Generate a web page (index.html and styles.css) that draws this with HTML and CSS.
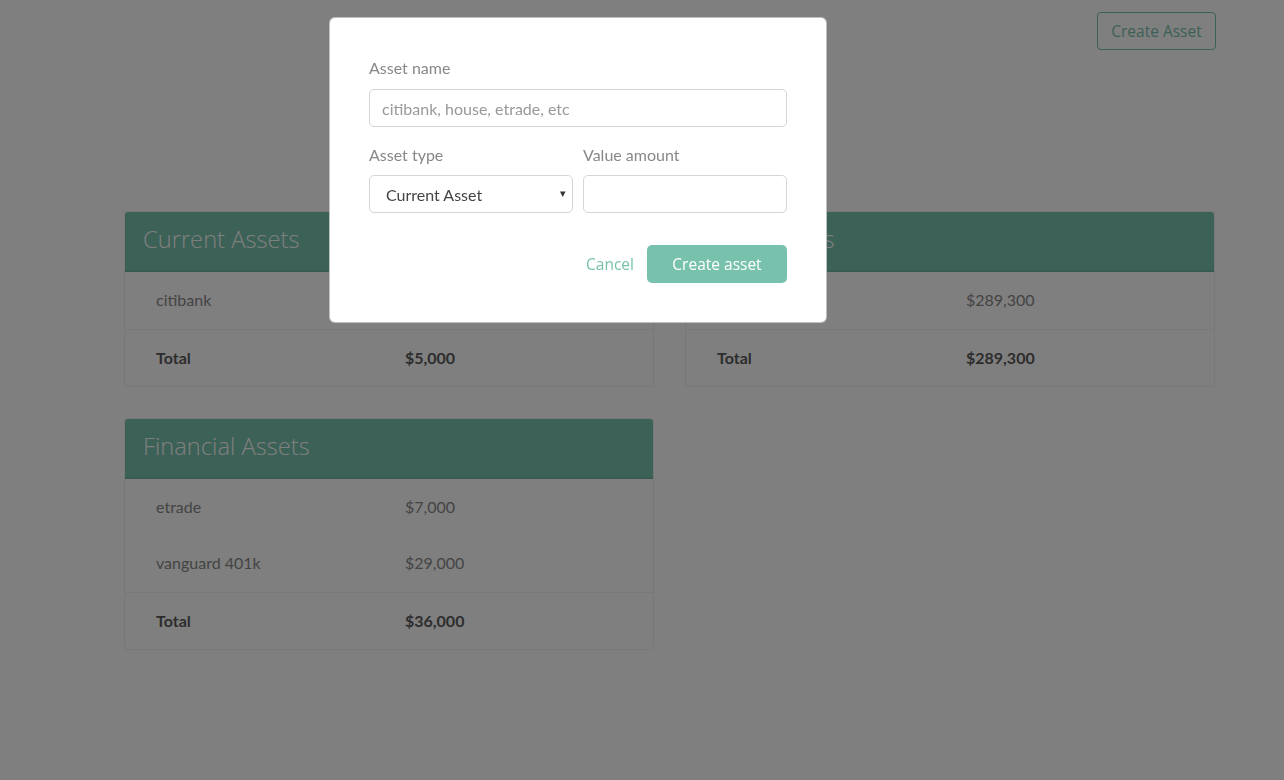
FILE: index.html
```html
<!DOCTYPE html>
<html lang="en">
<head>
<meta charset="utf-8">
<title>Assets</title>
<link rel="stylesheet" href="styles.css">
</head>
<body>
<div class="page">
  <div class="topbar">
    <button class="btn-outline">Create Asset</button>
  </div>
  <div class="grid">
    <section class="panel">
      <header class="panel-head">Current Assets</header>
      <table class="tbl">
        <tbody>
          <tr><td>citibank</td><td>$5,000</td></tr>
        </tbody>
        <tfoot>
          <tr><td>Total</td><td>$5,000</td></tr>
        </tfoot>
      </table>
    </section>
    <section class="panel">
      <header class="panel-head">Fixed Assets</header>
      <table class="tbl">
        <tbody>
          <tr><td>house</td><td>$289,300</td></tr>
        </tbody>
        <tfoot>
          <tr><td>Total</td><td>$289,300</td></tr>
        </tfoot>
      </table>
    </section>
    <section class="panel">
      <header class="panel-head">Financial Assets</header>
      <table class="tbl">
        <tbody>
          <tr><td>etrade</td><td>$7,000</td></tr>
          <tr><td>vanguard 401k</td><td>$29,000</td></tr>
        </tbody>
        <tfoot>
          <tr><td>Total</td><td>$36,000</td></tr>
        </tfoot>
      </table>
    </section>
  </div>
</div>

<div class="backdrop">
  <div class="modal">
    <div class="field">
      <label class="lbl" for="name">Asset name</label>
      <input class="inp" id="name" type="text" placeholder="citibank, house, etrade, etc">
    </div>
    <div class="field-row">
      <div class="field">
        <label class="lbl" for="type">Asset type</label>
        <div class="select">
          <span class="select-val">Current Asset</span>
          <span class="caret">&#9662;</span>
        </div>
      </div>
      <div class="field">
        <label class="lbl" for="amount">Value amount</label>
        <input class="inp" id="amount" type="text">
      </div>
    </div>
    <div class="actions">
      <button class="btn-link">Cancel</button>
      <button class="btn-primary">Create asset</button>
    </div>
  </div>
</div>
</body>
</html>
```

FILE: styles.css
```css
* { box-sizing: border-box; }

html, body {
  margin: 0;
  padding: 0;
  background: #fff;
  font-family: Lato, "Liberation Sans", sans-serif;
  color: #888;
  font-size: 16px;
}

.page {
  padding: 12px 68px 40px 124px;
}

.topbar {
  display: flex;
  justify-content: flex-end;
  height: 38px;
}

.btn-outline {
  height: 38px;
  width: 119px;
  padding: 0;
  border: 1px solid #78c2ad;
  border-radius: 4px;
  background: transparent;
  color: #78c2ad;
  font-family: "Open Sans", "Noto Sans", sans-serif;
  font-size: 15.5px;
}

.grid {
  margin-top: 161px;
  display: grid;
  grid-template-columns: 530px 530px;
  column-gap: 31px;
  row-gap: 31px;
  align-items: start;
}

.panel {
  border: 1px solid rgba(0,0,0,0.06);
  border-radius: 4px;
  background: #fff;
  overflow: hidden;
}

.panel-head {
  height: 60px;
  background: #78c2ad;
  border-bottom: 2px solid #70b6a2;
  color: #fff;
  font-family: "Open Sans", "Noto Sans", sans-serif;
  font-weight: 300;
  font-size: 23.7px;
  line-height: 55px;
  padding-left: 18px;
}

.tbl {
  width: 100%;
  border-collapse: collapse;
  table-layout: fixed;
}

.tbl td {
  padding: 16.25px 0;
  line-height: 24px;
  color: #888;
}

.tbl td:first-child {
  width: 280px;
  padding-left: 31px;
}

.tbl tfoot td {
  border-top: 1px solid rgba(0,0,0,0.05);
  font-weight: 700;
  color: #5a5a5a;
  padding-top: 16px;
  padding-bottom: 16px;
}

/* modal overlay */
.backdrop {
  position: fixed;
  inset: 0;
  background: rgba(0,0,0,0.5);
  padding: 17px 0 0 329px;
}

.modal {
  width: 498px;
  background: #fff;
  border: 1px solid rgba(0,0,0,0.25);
  border-radius: 6px;
  padding: 38px 39px 39px;
}

.field {
  display: flex;
  flex-direction: column;
  flex: 1 1 0;
  min-width: 0;
}

.lbl {
  line-height: 24px;
  margin-bottom: 9px;
  color: #888;
  font-size: 16px;
}

.field-row {
  display: flex;
  gap: 10px;
  margin-top: 16px;
}

.field-row .lbl {
  margin-bottom: 8px;
}

.inp {
  width: 100%;
  height: 38px;
  border: 1px solid #d6d6d6;
  border-radius: 5px;
  padding: 0 12px;
  font-family: Lato, "Liberation Sans", sans-serif;
  font-size: 16px;
  color: #555;
  outline: none;
}

.inp::placeholder { color: #999; }

.select {
  width: 100%;
  height: 38px;
  border: 1px solid #d6d6d6;
  border-radius: 5px;
  display: flex;
  align-items: center;
  justify-content: space-between;
  padding: 0 6px 0 16px;
  color: #444;
  font-size: 16px;
}

.caret {
  font-size: 11px;
  color: #333;
  margin-top: -3px;
}

.actions {
  display: flex;
  justify-content: flex-end;
  align-items: center;
  gap: 13px;
  margin-top: 32px;
}

.btn-link {
  border: 0;
  background: transparent;
  color: #78c2ad;
  font-family: "Open Sans", "Noto Sans", sans-serif;
  font-size: 15.5px;
  padding: 0;
}

.btn-primary {
  width: 140px;
  height: 38px;
  border: 0;
  border-radius: 5px;
  background: #78c2ad;
  color: #fff;
  font-family: "Open Sans", "Noto Sans", sans-serif;
  font-size: 15.5px;
}
```
